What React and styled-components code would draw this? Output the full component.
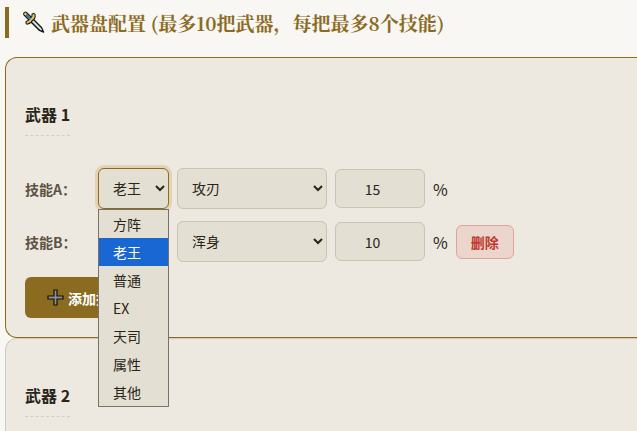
import React, { useState } from "react";
import styled, { createGlobalStyle, css } from "styled-components";

const GlobalStyle = createGlobalStyle`
  * {
    box-sizing: border-box;
  }
  body {
    margin: 0;
    background: #f9f7f3;
    color: #2a2419;
    font-family: "Noto Sans CJK SC", sans-serif;
    font-size: 16px;
    line-height: 24px;
  }
`;

const Page = styled.main`
  height: 100vh;
  overflow: hidden;
  padding: 7px 0 0 5px;
`;

const SectionTitle = styled.h2`
  display: flex;
  align-items: center;
  gap: 5px;
  margin: 0 0 19px;
  padding-left: 14px;
  border-left: 4px solid #8b6b1f;
  color: #8b6b1f;
  font-family: "Noto Serif CJK SC", "Noto Serif SC", "Source Han Serif SC", serif;
  font-size: 19px;
  font-weight: 700;
  line-height: 31px;
  white-space: nowrap;
`;

const WeaponCard = styled.section`
  padding: 44px 0 19px 19px;
  background: #ede8e0;
  border: 1px solid ${(props) => (props.$active ? "#8b6b1f" : "#d0cbbd")};
  border-right: 0;
  border-radius: 12px 0 0 12px;
`;

const WeaponName = styled.h3`
  width: fit-content;
  margin: 0 0 32px;
  padding-bottom: 8px;
  border-bottom: 1px dashed #d3cdc0;
  font-size: 16px;
  font-weight: 700;
  line-height: 25px;
`;

const SkillRow = styled.div`
  display: flex;
  align-items: center;
  gap: 8px;
  margin-bottom: 12px;
`;

const SkillLabel = styled.label`
  min-width: 65px;
  color: #5c5242;
  font-size: 14px;
  font-weight: 700;
`;

const field = css`
  padding: 10px;
  border: 1px solid #c9c4b4;
  border-radius: 6px;
  background: #e3dfd2;
  color: #2a2419;
  font-family: inherit;
  font-size: 14px;
  outline: none;
`;

const Select = styled.select`
  ${field}
  width: ${(props) => (props.$wide ? "150px" : "71px")};
  height: 41px;
  padding: 8px 10px 10px;
  ${(props) =>
    props.$open &&
    css`
      border-color: #8b6b1f;
      box-shadow: 0 0 0 3px #e3d3b4;
    `}
`;

const NumberInput = styled.input`
  ${field}
  width: 90px;
  height: 39px;
  text-align: center;
`;

const DeleteButton = styled.button`
  height: 34px;
  padding: 0 14px;
  border: 1px solid #dfa59c;
  border-radius: 6px;
  background: #ebd5cd;
  color: #c0392b;
  font-family: inherit;
  font-size: 14px;
  font-weight: 700;
`;

const AddButton = styled.button`
  display: flex;
  align-items: center;
  gap: 4px;
  height: 41px;
  margin-top: 15px;
  padding: 0 22px;
  border: 0;
  border-radius: 6px;
  background: #8b6b1f;
  color: #fff;
  font-family: inherit;
  font-size: 14px;
  font-weight: 700;
`;

const SelectBox = styled.div`
  position: relative;
  display: flex;
`;

const Menu = styled.ul`
  position: absolute;
  top: 100%;
  left: 0;
  z-index: 2;
  width: 100%;
  margin: 0;
  padding: 0;
  border: 1px solid #77736b;
  background: #e3dfd2;
  list-style: none;
`;

const MenuItem = styled.li`
  padding-left: 14px;
  background: ${(props) => (props.$selected ? "#1967d2" : "transparent")};
  color: ${(props) => (props.$selected ? "#fff" : "#2a2419")};
  font-size: 14px;
  line-height: 28px;
  cursor: default;
`;

const types = ["方阵", "老王", "普通", "EX", "天司", "属性", "其他"];

const SwordIcon = () => (
  <svg width="23" height="23" viewBox="0 0 23 23" aria-hidden="true">
    <path d="M9.5 7.5 L18.5 16.5 L20.5 21 L16 19 L7 10 Z" fill="#a9b0b2" stroke="#161616" strokeWidth="1.4" strokeLinejoin="round" />
    <path d="M9 9 L18.5 19" stroke="#e6eaea" strokeWidth="1.1" />
    <path d="M2.5 3 L7.5 8" stroke="#161616" strokeWidth="4.6" strokeLinecap="round" />
    <path d="M3 3.5 L8 8.5" stroke="#3c78a8" strokeWidth="2.6" />
    <circle cx="2.4" cy="2.9" r="1.3" fill="#e0c655" />
    <path d="M10.5 4 Q11 7 8.2 8.2 Q7 11 4.5 11.5" fill="none" stroke="#161616" strokeWidth="4.2" strokeLinecap="round" />
    <path d="M10.5 4 Q11 7 8.2 8.2 Q7 11 4.5 11.5" fill="none" stroke="#e0c655" strokeWidth="2.2" strokeLinecap="round" />
    <path d="M5 5.5 L7.5 8" stroke="#3c78a8" strokeWidth="2.4" />
  </svg>
);

const PlusIcon = () => (
  <svg width="17" height="17" viewBox="0 0 17 17" aria-hidden="true">
    <path d="M7 1 H10 V7 H16 V10 H10 V16 H7 V10 H1 V7 H7 Z" fill="#8f8f8b" stroke="#111" strokeWidth="1.2" />
  </svg>
);

const Skill = ({ id, label, name, value, open, removable }) => {
  const [type, setType] = useState("老王");

  return (
    <SkillRow>
      <SkillLabel htmlFor={id}>{label}：</SkillLabel>
      <SelectBox>
        <Select id={id} $open={open} value={type} onChange={(e) => setType(e.target.value)}>
          {types.map((t) => (
            <option key={t}>{t}</option>
          ))}
        </Select>
        {open && (
          <Menu>
            {types.map((t) => (
              <MenuItem key={t} $selected={t === type} onClick={() => setType(t)}>
                {t}
              </MenuItem>
            ))}
          </Menu>
        )}
      </SelectBox>
      <Select $wide defaultValue={name} aria-label={`${label}名称`}>
        <option>攻刃</option>
        <option>浑身</option>
      </Select>
      <NumberInput type="number" defaultValue={value} aria-label={`${label}数值`} />
      <span>%</span>
      {removable && <DeleteButton type="button">删除</DeleteButton>}
    </SkillRow>
  );
};

export default function App() {
  return (
    <>
      <GlobalStyle />
      <Page>
        <SectionTitle>
          <SwordIcon />
          武器盘配置 (最多10把武器，每把最多8个技能)
        </SectionTitle>
        <WeaponCard $active>
          <WeaponName>武器 1</WeaponName>
          <Skill id="skill-a" label="技能A" name="攻刃" value={15} open />
          <Skill id="skill-b" label="技能B" name="浑身" value={10} removable />
          <AddButton type="button">
            <PlusIcon />
            添加技能
          </AddButton>
        </WeaponCard>
        <WeaponCard>
          <WeaponName>武器 2</WeaponName>
        </WeaponCard>
      </Page>
    </>
  );
}
